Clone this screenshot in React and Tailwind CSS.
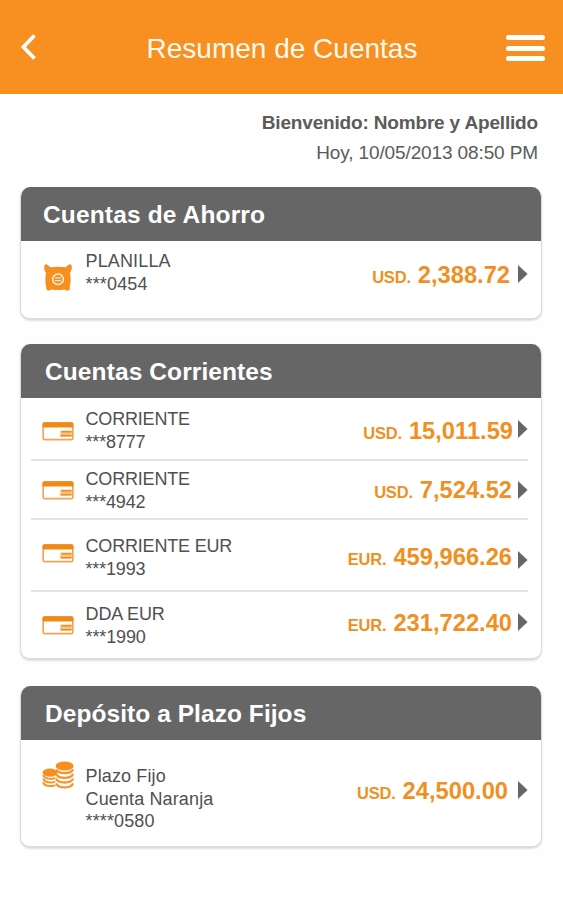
import React from 'react';

const PigIcon = () => (
  <svg className="w-7 h-[27px] ml-0.5" viewBox="0 0 28 27" fill="none">
    <path
      d="M.6 1C1.4-.2 2.8.2 4 1.2L6.4 3.2Q14 2.2 21.6 3.2L24 1.2C25.2.2 26.6-.2 27.4 1C28.3 3.4 27.8 6.6 26 8.8C26.8 13.2 27 18.8 25.8 22.4L25.8 25.2C25.4 27 21.8 27 21 25.6Q14 26.6 7 25.6C6.2 27 2.6 27 2.4 25.2L2.2 22.4C1 18.8 1.2 13.2 2 8.8C.2 6.6-.3 3.4.6 1Z"
      fill="#f78f1f"
    />
    <circle cx="14" cy="15.2" r="5.3" stroke="#fff4e4" strokeWidth="1.5" />
    <path d="M11.4 13.8H16.6M11.4 16.6H16.6" stroke="#ffe6c6" strokeWidth="1.2" strokeLinecap="round" />
  </svg>
);

const CardIcon = () => (
  <svg className="w-8 h-[19px]" viewBox="0 0 32 19" fill="none">
    <rect x="1.2" y="1" width="29.6" height="16.6" rx="1.4" fill="#fff" stroke="#f3a551" strokeWidth="1.7" />
    <path d="M.6 2Q.6.2 2.4.2H29.6Q31.4.2 31.4 2V5.6H.6Z" fill="#f08a15" />
    <rect x="18.4" y="8.6" width="11.4" height="6" rx=".6" fill="#f8c285" />
    <path d="M19.4 9.7H29.6M18.4 13.7H29.6" stroke="#f08f20" strokeWidth="1.6" />
  </svg>
);

const CoinsIcon = () => (
  <svg className="w-8 h-7" viewBox="0 0 32 28" fill="none">
    <ellipse cx="8" cy="11.6" rx="7.4" ry="4.2" fill="#f78f1f" />
    <g stroke="#f7952c" strokeWidth="2" strokeLinecap="round">
      <path d="M1.4 14.6C3 18 9 18.4 12.6 17.2" />
      <path d="M1.4 18.3C3 21.5 9 22 12.6 20.9" />
      <path d="M1.4 22C3 25.2 9 25.6 12.6 24.6" />
    </g>
    <ellipse cx="22.4" cy="5.4" rx="10.2" ry="6" fill="#fff" />
    <ellipse cx="22.6" cy="5" rx="9" ry="4.5" fill="#f78f1f" />
    <g stroke="#f7952c" strokeWidth="2.3" strokeLinecap="round">
      <path d="M14.6 9.2C17 13.2 28.2 13.2 30.6 9.2" />
      <path d="M14.6 13.8C17 17.8 28.2 17.8 30.6 13.8" />
      <path d="M14.6 18.5C17 22.5 28.2 22.5 30.6 18.5" />
      <path d="M14.6 23.2C17 27.4 28.2 27.4 30.6 23.2" />
    </g>
  </svg>
);

const icons = { pig: PigIcon, card: CardIcon, coins: CoinsIcon };

const sections = [
  {
    title: 'Cuentas de Ahorro',
    className: 'mb-[24px]',
    titleClass: 'pl-[22px] tracking-[0.15px]',
    rows: [
      {
        icon: 'pig',
        lines: ['PLANILLA', '***0454'],
        currency: 'USD.',
        amount: '2,388.72',
        rowClass: 'h-[77px]',
        iconClass: 'pt-[23px]',
        textClass: 'pt-[9px] tracking-[0.15px]',
        amountClass: 'pt-[18px] pr-2',
        arrowClass: 'pt-[24px]',
      },
    ],
  },
  {
    title: 'Cuentas Corrientes',
    className: 'mb-[26px]',
    titleClass: 'pl-6 tracking-[0.1px]',
    rows: [
      {
        icon: 'card',
        lines: ['CORRIENTE', '***8777'],
        currency: 'USD.',
        amount: '15,011.59',
        rowClass: 'h-[63px]',
        iconClass: 'pt-[24px]',
        textClass: 'pt-[10px] tracking-[-0.18px]',
        amountClass: 'pt-[17px] pr-[5px]',
        arrowClass: 'pt-[22px]',
      },
      {
        icon: 'card',
        lines: ['CORRIENTE', '***4942'],
        currency: 'USD.',
        amount: '7,524.52',
        rowClass: 'h-[59px]',
        iconClass: 'pt-[20px]',
        textClass: 'pt-[7px] tracking-[-0.18px]',
        amountClass: 'pt-[13px] pr-[6px]',
        arrowClass: 'pt-[20px]',
      },
      {
        icon: 'card',
        lines: ['CORRIENTE EUR', '***1993'],
        currency: 'EUR.',
        amount: '459,966.26',
        rowClass: 'h-[72px]',
        iconClass: 'pt-[24px]',
        textClass: 'pt-[15px] tracking-[-0.18px]',
        amountClass: 'pt-[21px] pr-[6px]',
        arrowClass: 'pt-[31px]',
      },
      {
        icon: 'card',
        lines: ['DDA EUR', '***1990'],
        currency: 'EUR.',
        amount: '231,722.40',
        rowClass: 'h-[66px]',
        iconClass: 'pt-[24px]',
        textClass: 'pt-[11px] tracking-[-0.12px]',
        amountClass: 'pt-[15px] pr-[6px]',
        arrowClass: 'pt-[21px]',
      },
    ],
  },
  {
    title: 'Depósito a Plazo Fijos',
    className: '',
    titleClass: 'pl-6 tracking-[0.06px]',
    rows: [
      {
        icon: 'coins',
        lines: ['Plazo Fijo', 'Cuenta Naranja', '****0580'],
        currency: 'USD.',
        amount: '24,500.00',
        rowClass: 'h-[106px]',
        iconClass: 'pt-[21px]',
        textClass: 'pt-[25px] tracking-[0.13px]',
        amountClass: 'pt-[35px] pr-[10px]',
        arrowClass: 'pt-[41px]',
      },
    ],
  },
];

const AccountRow = ({ row, isLast }) => {
  const Icon = icons[row.icon];

  return (
    <button
      className={`flex w-full items-start pl-[11px] text-left ${row.rowClass} ${
        isLast ? '' : 'border-b-2 border-[#e4e4e4]'
      }`}
    >
      <div className={`w-[43.5px] shrink-0 ${row.iconClass}`}>
        <Icon />
      </div>
      <div className={`text-[18px] leading-[22.5px] text-[#505050] ${row.textClass}`}>
        {row.lines.map((line) => (
          <p key={line}>{line}</p>
        ))}
      </div>
      <div className={`ml-auto flex items-baseline gap-[7px] font-bold leading-8 text-[#f09022] ${row.amountClass}`}>
        <span className="text-[16.5px] tracking-[-0.2px]">{row.currency}</span>
        <span className="text-[23.7px]">{row.amount}</span>
      </div>
      <div className={row.arrowClass}>
        <svg className="w-[10px] h-[18px]" viewBox="0 0 10 18">
          <path d="M0 0L9.6 9L0 18Z" fill="#666" />
        </svg>
      </div>
    </button>
  );
};

const AccountSection = ({ section }) => (
  <section
    className={`overflow-hidden rounded-[10px] border-x border-b-2 border-[#dcdcdc] bg-white shadow-[0_1px_2px_rgba(0,0,0,0.12)] ${section.className}`}
  >
    <h2
      className={`-mx-px h-[54px] bg-[#666] text-[24.5px] font-bold leading-[56px] text-white ${section.titleClass}`}
    >
      <span className="pl-px">{section.title}</span>
    </h2>
    <div className="pl-[10px] pr-[13px]">
      {section.rows.map((row, i) => (
        <AccountRow key={row.lines.join()} row={row} isLast={i === section.rows.length - 1} />
      ))}
    </div>
  </section>
);

const App = () => {
  return (
    <div className="h-[900px] w-[563px] overflow-hidden bg-[#fefefe] font-['Liberation_Sans',Arial,sans-serif]">
      <header className="flex h-[94px] items-center justify-between bg-[#f79020] pl-5 pr-[18px]">
        <button aria-label="Volver">
          <svg className="w-[18px] h-[27px]" viewBox="0 0 18 27" fill="none">
            <path d="M14.5 1.5L3.4 13L14.5 24.5" stroke="#fff" strokeWidth="3.8" />
          </svg>
        </button>
        <h1 className="pl-[20px] pt-[3px] text-[28px] text-[#fff9ee]">Resumen de Cuentas</h1>
        <button aria-label="Menú" className="flex w-[39px] flex-col gap-[5.5px] pt-[2px]">
          <span className="h-[5px] rounded-sm bg-white" />
          <span className="h-[5px] rounded-sm bg-white" />
          <span className="h-[5px] rounded-sm bg-white" />
        </button>
      </header>

      <div className="h-[93px] pr-[25px] pt-[13px] text-right text-[#5b5b5b]">
        <p className="text-[19px] font-bold leading-[31px] tracking-[-0.17px]">Bienvenido: Nombre y Apellido</p>
        <p className="text-[19px] leading-[30px] tracking-[-0.12px]">Hoy, 10/05/2013 08:50 PM</p>
      </div>

      <main className="pl-5 pr-[21px]">
        {sections.map((section) => (
          <AccountSection key={section.title} section={section} />
        ))}
      </main>
    </div>
  );
};

export default App;
